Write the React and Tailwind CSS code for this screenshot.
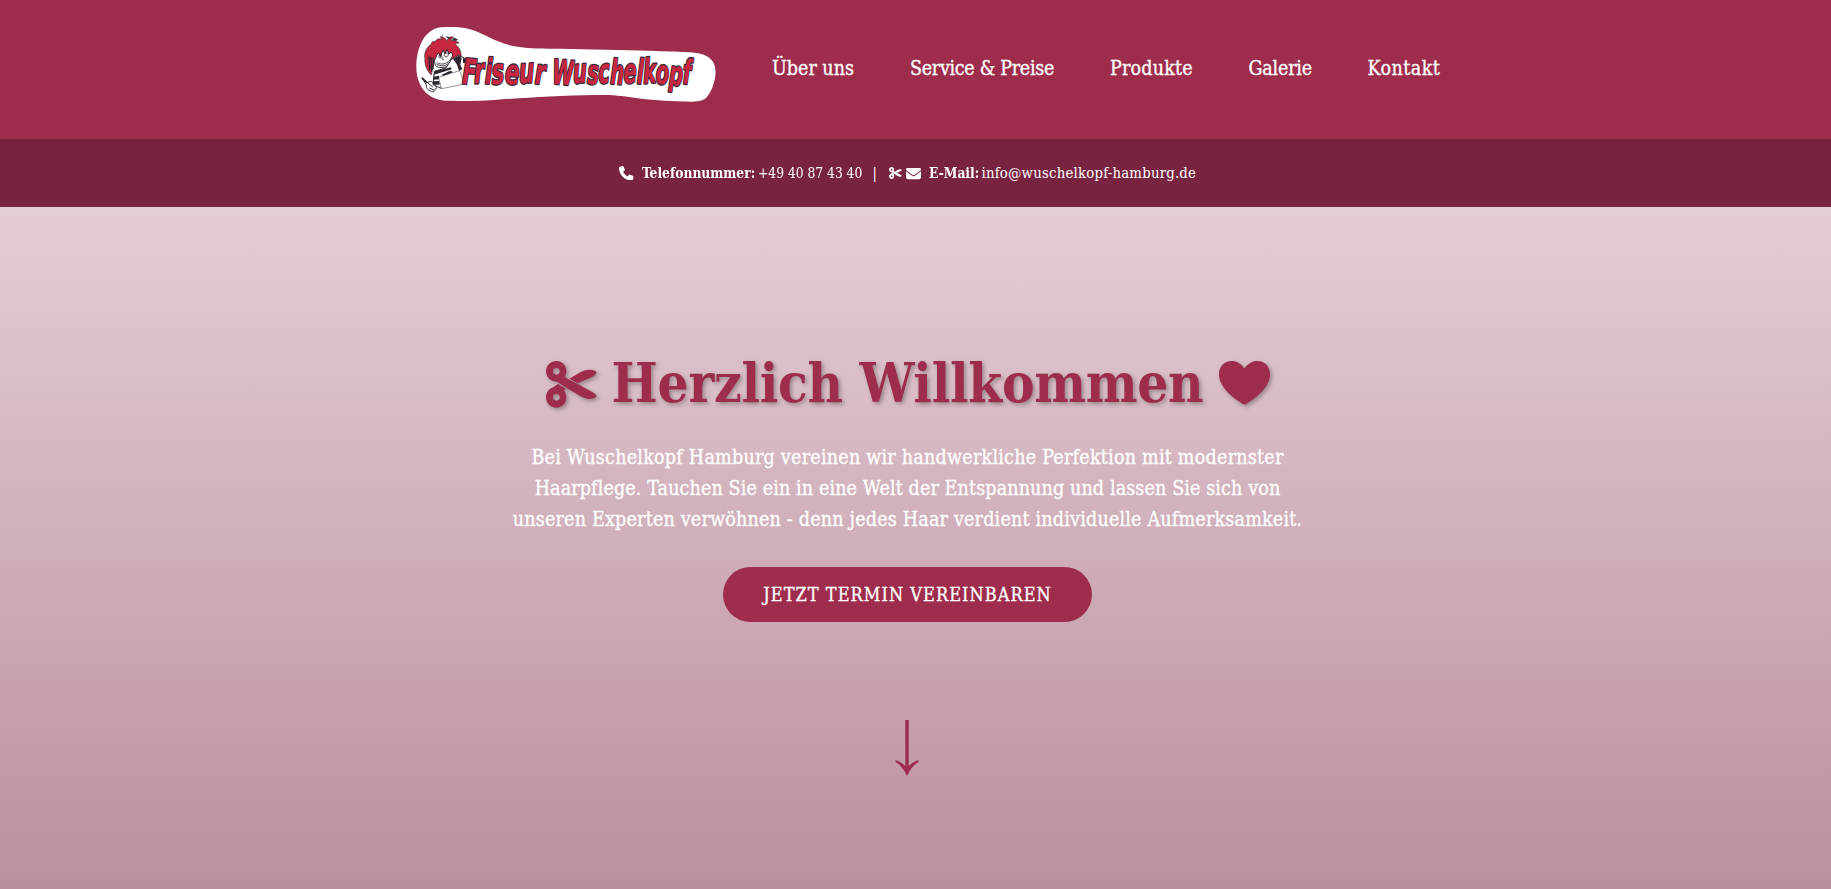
import { FaPhone, FaEnvelope } from "react-icons/fa6";

const navItems = [
  { label: "Über uns", cls: "w-[82px] tracking-[0px]" },
  { label: "Service & Preise", cls: "w-[144px] tracking-[-0.3px]" },
  { label: "Produkte", cls: "w-[82.5px] tracking-[0.18px]" },
  { label: "Galerie", cls: "w-[63px] tracking-[-0.2px]" },
  { label: "Kontakt", cls: "w-[73px] tracking-[0.45px]" },
];

function Scissors({ className }) {
  return (
    <svg viewBox="0 0 153 141" className={className} fill="currentColor">
      <path
        fillRule="evenodd"
        d="M31 0 C48 0 61 13 61 30 C61 37 59 43 56 48 L140 94 C145 97 150 101 152 106 C147 112 137 115 126 114 C118 113 111 110 104 106 L57 78 L51 74 L33 62 C32 62 31 62 31 62 C14 62 0 48 0 31 C0 14 14 0 31 0 Z M31 21 A10 10 0 1 0 31 41 A10 10 0 1 0 31 21 Z"
      />
      <path d="M70 53 L103 34 C112 28 122 26 131 26 C141 26 149 29 152 34 C150 40 144 45 138 48 L95 67 Z" />
      <path
        fillRule="evenodd"
        d="M36 69 L59 83 L54 89 C59 95 61 102 61 109 C61 127 48 140 31 140 C14 140 0 127 0 109 C0 94 10 82 22 79 Z M31 99 A10 10 0 1 0 31 119 A10 10 0 1 0 31 99 Z"
      />
    </svg>
  );
}

function Heart({ className }) {
  return (
    <svg viewBox="0 0 153 130" className={className} fill="currentColor">
      <path d="M76 22 C86 8 100 0 115 0 C138 0 153 17 153 40 C153 76 112 110 84 127 C79 131 74 131 69 127 C41 110 0 76 0 40 C0 17 15 0 38 0 C53 0 67 8 76 22 Z" />
    </svg>
  );
}

function Logo() {
  return (
    <svg viewBox="415 26 302 77" className="h-[77px] w-[302px] shrink-0" role="img">
      <path
        fill="#fff"
        d="M441 27.2 C452 26.8 463 27 471 29.5 C484 33.5 495 42 513 46 C530 49 545 48.6 560 48.8 L640 50.6 C670 51.6 685 51.8 697 53 C710 55 715.5 62 715.6 72 C715.4 82 711 93 706 98 C702 102 692 102 684 101.6 C668 101.2 648 100 634 97.8 C620 95.5 612 94.8 595 95 C560 95.4 530 97.6 500 99.4 C484 100.6 464 101.3 446 100.8 C428 99.5 418.5 88 416.6 72 C415 55 421 29.5 441 27.2 Z"
      />
      <g transform="translate(411 22) scale(.33333)" strokeLinejoin="round" strokeLinecap="round">
        <path
          fill="#c8283f"
          stroke="#2d2430"
          strokeWidth="2"
          d="M60 158 C48 146 40 128 42 110 C38 92 48 74 62 66 C60 60 66 56 72 60 C76 50 88 48 94 54 L88 44 C98 44 104 50 108 56 C112 46 120 42 128 46 C122 48 120 52 122 56 C132 54 140 58 144 64 C138 62 134 64 134 68 C146 76 152 92 150 108 C148 118 142 124 134 126 L116 106 L70 118 Z"
        />
        <path
          fill="#fff"
          stroke="#2d2430"
          strokeWidth="3"
          d="M84 94 L88 104 L96 84 L102 96 L108 82 L114 96 L120 90 C128 98 124 106 118 112 C126 120 114 136 96 136 C80 138 70 132 72 122 C66 114 78 108 76 100 Z"
        />
        <path fill="none" stroke="#2d2430" strokeWidth="2.5" d="M92 98 C88 94 82 100 84 106 C88 110 94 106 92 98 M112 94 C104 90 98 96 100 102 C106 108 114 102 112 94 M96 106 C90 110 92 114 98 112 M78 122 C90 130 106 126 116 116 M78 127 C90 134 104 132 112 124" />
        <path stroke="#2d2430" strokeWidth="4" fill="none" d="M54 104 L56 142 M60 106 L62 148 M67 108 L66 140" />
        <path fill="#2d2430" d="M92 40 L96 37 L94 43 Z M104 42 L114 45 L120 52 L110 49 Z M122 50 L132 48 L142 54 L130 56 Z" />
        <path fill="#fff" stroke="#2d2430" strokeWidth="3" d="M122 112 L142 100 L168 112 L162 178 L88 198 L66 188 L70 148 L104 138 Z" />
        <path fill="#2d2430" d="M126 110 L144 101 L152 108 L148 128 L154 142 L144 146 L138 128 Z M156 108 L168 112 L166 124 L156 122 Z M70 148 L120 136 L122 142 L69 158 Z M92 158 L118 146 L126 150 L98 164 Z M68 164 L84 161 L84 172 L67 173 Z M66 178 L84 177 L86 188 L66 188 Z" />
        <path fill="#fff" stroke="#2d2430" strokeWidth="1.5" d="M84 165 L146 146 L160 186 L92 200 Z" />
        <path fill="#fff" stroke="#2d2430" strokeWidth="3" d="M34 168 L50 182 C58 174 68 180 66 188 C76 190 80 200 72 202 C72 212 60 210 58 206 C50 204 44 196 46 190 Z M50 182 L64 194 M56 198 L68 204" />
        <path stroke="#2d2430" strokeWidth="5" d="M34 169 L47 181" />
      </g>
      <g
        fontFamily="'DejaVu Sans', sans-serif"
        fontWeight="700"
        fontStyle="italic"
        fill="#c8283f"
        stroke="#3a2a3e"
        strokeWidth="2.6"
        strokeLinejoin="round"
        paintOrder="stroke"
      >
        <text x="462" y="83.5" fontSize="35" textLength="83" lengthAdjust="spacingAndGlyphs" dy="0 0 0 1 -1 0 0" rotate="3 -3 2 -4 3 -3 4">
          Friseur
        </text>
        <text x="552" y="83.5" fontSize="34" textLength="139" lengthAdjust="spacingAndGlyphs" dy="0 0 0 0 0 0 0 0 0 1 -1" rotate="3 -3 3 -3 3 -3 2 -3 3 4 3">
          Wuschelkopf
        </text>
      </g>
    </svg>
  );
}

export default function App() {
  return (
    <div className="flex h-[889px] w-full flex-col overflow-hidden font-['Roboto_Slab','DejaVu_Serif_Condensed','DejaVu_Serif',serif] text-white">
      <header className="flex h-[139px] shrink-0 items-start bg-[#9e2d4d] pl-[414.5px]">
        <div className="pt-[26px]">
          <Logo />
        </div>
        <nav className="ml-[55.5px] flex gap-14 pt-[55px] text-[19.5px] leading-[28px] [-webkit-text-stroke:0.3px_#fff]">
          {navItems.map((item) => (
            <a key={item.label} href="#" className={"whitespace-nowrap " + item.cls}>
              {item.label}
            </a>
          ))}
        </nav>
      </header>

      <div className="flex h-[68px] shrink-0 items-center bg-[#78233f] pl-[619px] text-[14.8px] leading-[22px] whitespace-nowrap">
        <FaPhone className="size-[14.5px]" />
        <span className="ml-[8px] w-[116.5px]">
          <span className="inline-block origin-left scale-x-[0.925] font-bold">Telefonnummer:</span>
        </span>
        <span className="w-[104.5px]">
          <span className="inline-block origin-left scale-x-[0.925]">+49 40 87 43 40</span>
        </span>
        <span className="ml-[10px] w-[5px]">|</span>
        <Scissors className="ml-[11px] h-[12px] w-[13px]" />
        <FaEnvelope className="ml-[4px] size-[15px]" />
        <span className="ml-[8px] w-[53px]">
          <span className="inline-block origin-left scale-x-[0.925] font-bold">E-Mail:</span>
        </span>
        <span className="w-[215px] tracking-[0.2px]">info@wuschelkopf-hamburg.de</span>
      </div>

      <main className="flex flex-1 flex-col items-center bg-linear-to-b from-[#e4ced6] to-[#ba909d] pr-[16px]">
        <h1 className="mt-[141px] flex h-[70px] items-center pl-[1px] text-[54.4px] leading-[70px] font-bold whitespace-nowrap text-[#9e2d4d]">
          <Scissors className="mt-[2px] h-[47px] w-[51px] overflow-visible drop-shadow-[2px_2px_2px_rgba(0,0,0,0.3)]" />
          <span className="mr-[16px] ml-[15px] tracking-[-0.28px] [text-shadow:2px_2px_4px_rgba(0,0,0,0.3)]">
            Herzlich Willkommen
          </span>
          <Heart className="h-[43.5px] w-[51px] overflow-visible drop-shadow-[2px_2px_2px_rgba(0,0,0,0.3)]" />
        </h1>
        <p className="mt-[24px] flex flex-col items-center text-[19.5px] leading-[31px] whitespace-nowrap [-webkit-text-stroke:0.3px_#fff]">
          <span className="tracking-[0.24px]">Bei Wuschelkopf Hamburg vereinen wir handwerkliche Perfektion mit modernster</span>
          <span className="tracking-[0.13px]">Haarpflege. Tauchen Sie ein in eine Welt der Entspannung und lassen Sie sich von</span>
          <span className="tracking-[0.2px]">unseren Experten verwöhnen - denn jedes Haar verdient individuelle Aufmerksamkeit.</span>
        </p>
        <a
          href="#"
          className="mt-[32px] flex h-[55px] w-[369px] shrink-0 items-center justify-center rounded-full bg-[#9e2d4d] text-[18px] tracking-[1.05px] whitespace-nowrap [-webkit-text-stroke:0.3px_#fff]"
        >
          JETZT TERMIN VEREINBAREN
        </a>
        <svg viewBox="0 0 24 56" className="mt-[98px] mr-[1px] h-[56px] w-[24px] shrink-0" fill="#9e2d4d">
          <path d="M10.3 0 H13.7 V46 C16.5 43.5 19.5 41.3 23.4 40 V42 C18.5 45 15 49.5 12 56 C9 49.5 5.5 45 .6 42 V40 C4.5 41.3 7.5 43.5 10.3 46 Z" />
        </svg>
      </main>
    </div>
  );
}
